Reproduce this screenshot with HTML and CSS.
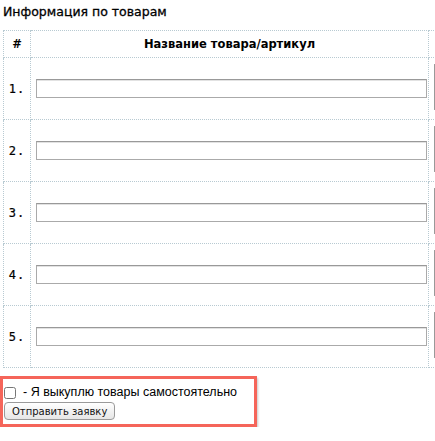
FILE: index.html
```html
<!DOCTYPE html>
<html lang="ru">
<head>
    <meta charset="UTF-8">
    <title>Информация по товарам</title>
    <link rel="stylesheet" href="styles.css">
</head>
<body>
    <div class="page">
        <h3 class="title">Информация по товарам</h3>
        <table class="goods">
            <tr>
                <th class="num">#</th>
                <th class="name">Название товара/артикул</th>
                <th class="extra"></th>
            </tr>
            <tr>
                <td class="num">1.</td>
                <td class="name"><input type="text" class="field"></td>
                <td class="extra"><textarea class="note"></textarea></td>
            </tr>
            <tr>
                <td class="num">2.</td>
                <td class="name"><input type="text" class="field"></td>
                <td class="extra"><textarea class="note"></textarea></td>
            </tr>
            <tr>
                <td class="num">3.</td>
                <td class="name"><input type="text" class="field"></td>
                <td class="extra"><textarea class="note"></textarea></td>
            </tr>
            <tr>
                <td class="num">4.</td>
                <td class="name"><input type="text" class="field"></td>
                <td class="extra"><textarea class="note"></textarea></td>
            </tr>
            <tr>
                <td class="num">5.</td>
                <td class="name"><input type="text" class="field"></td>
                <td class="extra"><textarea class="note"></textarea></td>
            </tr>
        </table>

        <div class="order-box">
            <label class="self-buy"><input type="checkbox" class="check"> - Я выкуплю товары самостоятельно</label>
            <button class="submit">Отправить заявку</button>
        </div>
    </div>
</body>
</html>
```

FILE: styles.css
```css
body {
    margin: 0;
    font-family: "DejaVu Sans", sans-serif;
    color: #000;
    background: #fff;
}
.page {
    width: 435px;
    overflow: hidden;
}
.title {
    margin: 4px 0 10px 3px;
    font-size: 12.5px;
    font-weight: normal;
    line-height: 16px;
    color: #000;
    -webkit-text-stroke: 0.3px #000;
}
.goods {
    border-collapse: collapse;
    margin-left: 3px;
    table-layout: fixed;
    width: 496px;
}
.goods th, .goods td {
    border: 1px dotted #b8cad2;
    padding: 0;
}
.goods th {
    height: 26px;
    font-size: 11.5px;
    font-weight: bold;
}
.goods td {
    height: 61px;
}
.goods .num {
    width: 26px;
    text-align: center;
}
td.num {
    font-family: "DejaVu Sans Mono", monospace;
    font-size: 12px;
    letter-spacing: 1px;
    -webkit-text-stroke: 0.2px #000;
}
.goods .name {
    width: 397px;
}
td.name {
    padding: 0 1px 0 5px;
}
.field {
    display: block;
    width: 391px;
    height: 19px;
    box-sizing: border-box;
    margin: 0;
    border: 1px solid #aaa;
    border-top-color: #999;
    box-shadow: inset 0 1px 0 #e2e2e2;
    font-size: 12px;
}
.goods .extra {
    width: 70px;
}
td.extra {
    padding: 0 5px;
    vertical-align: top;
}
.note {
    display: block;
    width: 60px;
    height: 46px;
    margin-top: 6px;
    box-sizing: border-box;
    border: 1px solid #aaa;
    border-left: 2px solid #999;
    resize: none;
}
.order-box {
    width: 250px;
    margin-top: 8px;
    padding: 6px 0 4px 1px;
    border: 3px solid #f5655a;
    box-shadow: 1px 2px 2px #c8c8c8;
    font-family: "Liberation Sans", Arial, sans-serif;
    font-size: 12.5px;
}
.self-buy {
    display: flex;
    align-items: center;
    gap: 5px;
    line-height: 15px;
}
.check {
    margin: 0 2px 0 0;
    width: 12px;
    height: 12px;
}
.submit {
    margin-top: 2px;
    height: 18px;
    padding: 0 7px;
    font-family: "DejaVu Sans", sans-serif;
    font-size: 10px;
    border: 1px solid #9a9a9a;
    border-radius: 4px;
    background: linear-gradient(#ffffff, #e6e6e6);
    color: #111;
}
```
